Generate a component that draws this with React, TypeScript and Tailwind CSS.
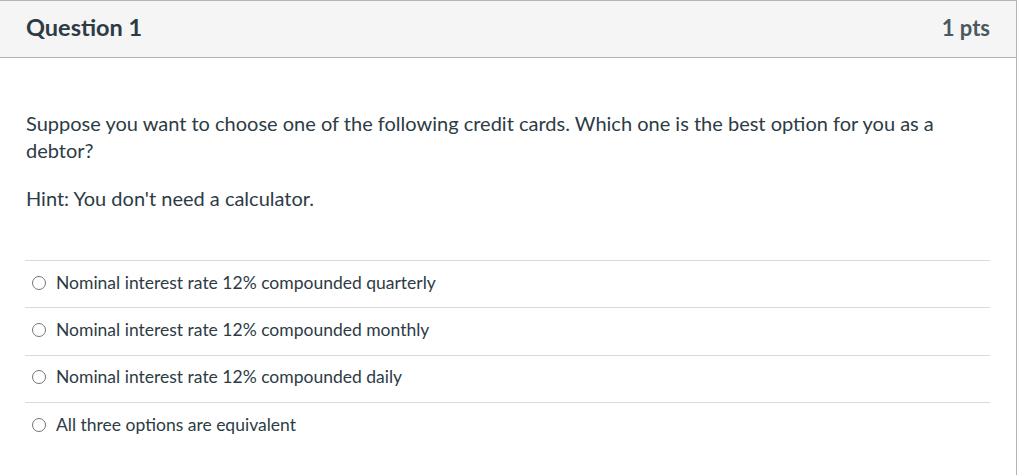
import React from "react";

const options = [
    "Nominal interest rate 12% compounded quarterly",
    "Nominal interest rate 12% compounded monthly",
    "Nominal interest rate 12% compounded daily",
    "All three options are equivalent",
];

const App: React.FC = () => {
    return (
        <div className="w-[1018px] h-[475px] bg-white font-['Lato','Liberation_Sans',sans-serif] text-[#2d3b45]">
            <div className="w-[1017px] h-full border-t border-r border-[#b3b3b3]">
                <div className="h-[57px] bg-[#f5f5f5] border-b border-[#b3b3b3] px-[26px] pb-[2px] flex items-center justify-between">
                    <h2 className="text-[23.5px] leading-none font-bold">Question 1</h2>
                    <span className="text-[22px] leading-none font-bold text-[#4b5860]">1 pts</span>
                </div>
                <div className="pt-[52px] px-[26px] text-[20px] leading-[27px]">
                    <p>
                        Suppose you want to choose one of the following credit cards. Which one is the best option for you as a
                        debtor?
                    </p>
                    <p className="mt-[21px]">Hint: You don't need a calculator.</p>
                </div>
                <div className="mt-[48px] ml-[25px] mr-[26px]">
                    {options.map((opt) => (
                        <label
                            key={opt}
                            className="h-[47.4px] border-t border-[#dadada] flex items-center gap-[10px] pl-[7px] pb-[3px] text-[17.5px]"
                        >
                            <span className="w-[14px] h-[14px] rounded-full border border-[#767676] bg-white shrink-0" />
                            <span>{opt}</span>
                        </label>
                    ))}
                </div>
            </div>
        </div>
    );
};

export default App;
